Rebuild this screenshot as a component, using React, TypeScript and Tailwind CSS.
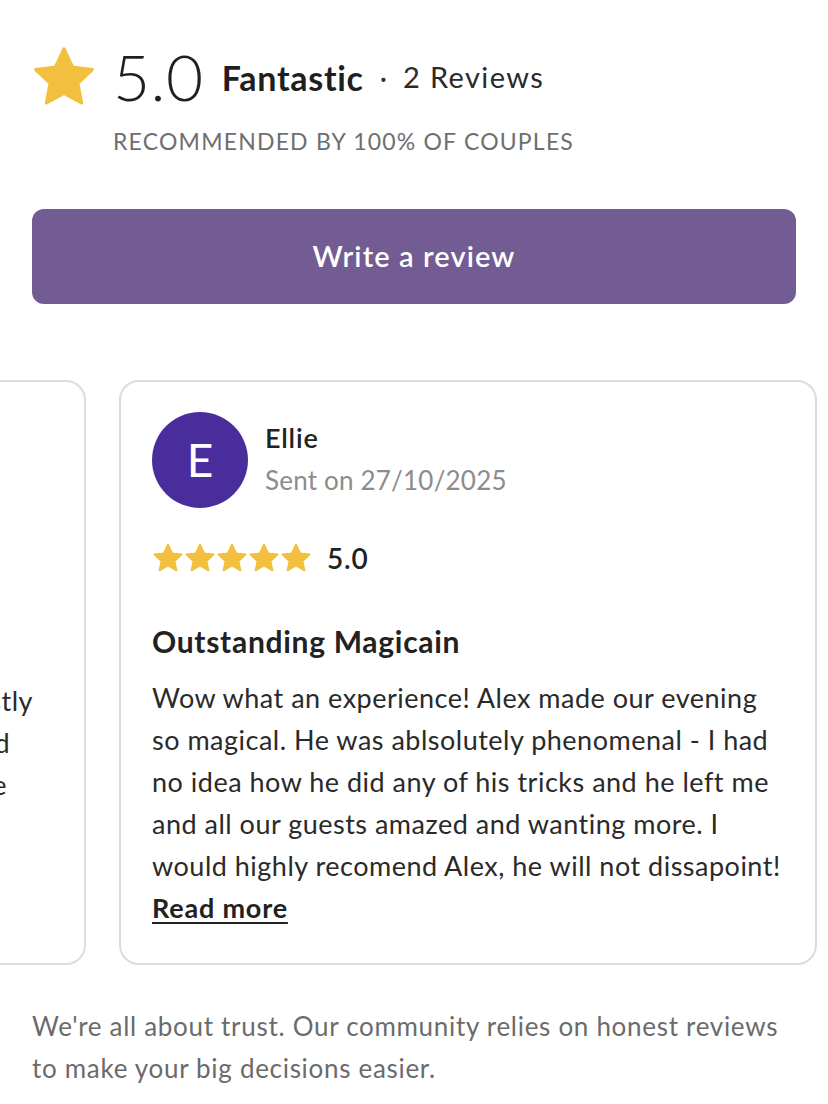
import { ReactNode } from 'react';

const STAR_PATH =
  'M12 1.8l3.1 6.6 7.2.9-5.3 5 1.4 7.1L12 17.9l-6.4 3.5 1.4-7.1-5.3-5 7.2-.9z';

function Star({ className }: { className: string }) {
  return (
    <svg viewBox="0 0 24 24" className={className} fill="#f2bf3e">
      <path d={STAR_PATH} strokeLinejoin="round" stroke="#f2bf3e" strokeWidth={1.2} />
    </svg>
  );
}

function Card({ children, className = '' }: { children: ReactNode; className?: string }) {
  return (
    <div className={`w-[698px] h-[585px] shrink-0 rounded-[20px] border-2 border-[#dcdcdc] bg-white ${className}`}>
      {children}
    </div>
  );
}

const fragments = [
  { text: 'was honestly', pr: 'pr-[51px]' },
  { text: 'bed', pr: 'pr-[74px]' },
  { text: 'more', pr: 'pr-[77px]' },
];

const bodyLines = [
  'Wow what an experience! Alex made our evening',
  'so magical. He was ablsolutely phenomenal - I had',
  'no idea how he did any of his tricks and he left me',
  'and all our guests amazed and wanting more. I',
  'would highly recomend Alex, he will not dissapoint!',
];

function App() {
  return (
    <div
      className="min-h-screen w-[828px] bg-white overflow-hidden text-[#222]"
      style={{ fontFamily: 'Lato, "Open Sans", sans-serif' }}
    >
      <div className="px-8 pt-[44px]">
        <div className="flex items-center">
          <Star className="w-[66px] h-[66px] -ml-[1px]" />
          <span className="ml-[16px] text-[64px] font-light leading-none tracking-[0.5px] text-[#1f1f1f]">5.0</span>
          <span className="ml-[18px] text-[34px] font-bold tracking-[0.7px] text-[#1f1f1f]">Fantastic</span>
          <span className="ml-[16px] text-[28px] text-[#333]">·</span>
          <span className="ml-[16px] text-[29px] tracking-[1.4px] text-[#2a2a2a]">2 Reviews</span>
        </div>
        <div className="mt-[14px] ml-[81px] text-[23px] tracking-[1.2px] text-[#6e6e6e]">
          RECOMMENDED BY 100% OF COUPLES
        </div>
        <button className="mt-[50px] w-full h-[95px] rounded-[12px] bg-[#735c94] text-white text-[29px] font-semibold tracking-[1.1px]">
          Write a review
        </button>
      </div>

      <div className="mt-[76px] overflow-hidden">
        <div className="flex gap-[33px] -ml-[612px]">
          <Card>
            <div className="pt-[298px] text-[27px] leading-[42px] tracking-[0.5px] text-[#2a2a2a]">
              {fragments.map((f) => (
                <div key={f.text} className={`text-right whitespace-nowrap ${f.pr}`}>
                  {f.text}
                </div>
              ))}
            </div>
          </Card>
          <Card>
            <div className="pl-[31px] pr-[12px] pt-[30px]">
              <div className="flex items-center">
                <div className="w-[96px] h-[96px] rounded-full bg-[#4a2d9c] flex items-center justify-center text-white text-[46px]">
                  E
                </div>
                <div className="ml-[17px] -mt-[2px]">
                  <div className="text-[27px] font-semibold tracking-[0.8px] text-[#222] leading-[42px]">Ellie</div>
                  <div className="text-[26px] tracking-[0.2px] text-[#8c8c8c] leading-[42px]">Sent on 27/10/2025</div>
                </div>
              </div>
              <div className="mt-[29px] flex items-center">
                <div className="flex">
                  {[0, 1, 2, 3, 4].map((i) => (
                    <Star key={i} className="w-[32px] h-[32px]" />
                  ))}
                </div>
                <span className="ml-[15px] text-[28px] font-semibold tracking-[0.8px] text-[#222]">5.0</span>
              </div>
              <div className="mt-[40px] text-[30px] font-bold tracking-[0.7px] text-[#222]">Outstanding Magicain</div>
              <p className="mt-[13px] text-[27px] leading-[42px] tracking-[0.5px] text-[#2a2a2a]">
                {bodyLines.map((line) => (
                  <span key={line} className="block whitespace-nowrap">
                    {line}
                  </span>
                ))}
              </p>
              <div className="text-[27px] leading-[42px] font-bold tracking-[0.8px] underline underline-offset-4 text-[#222]">
                Read more
              </div>
            </div>
          </Card>
        </div>
      </div>

      <p className="px-8 mt-[40px] text-[26px] leading-[42px] tracking-[0.7px] text-[#6b6b6b]">
        <span className="block whitespace-nowrap">We're all about trust. Our community relies on honest reviews</span>
        <span className="block whitespace-nowrap">to make your big decisions easier.</span>
      </p>
    </div>
  );
}

export default App;
